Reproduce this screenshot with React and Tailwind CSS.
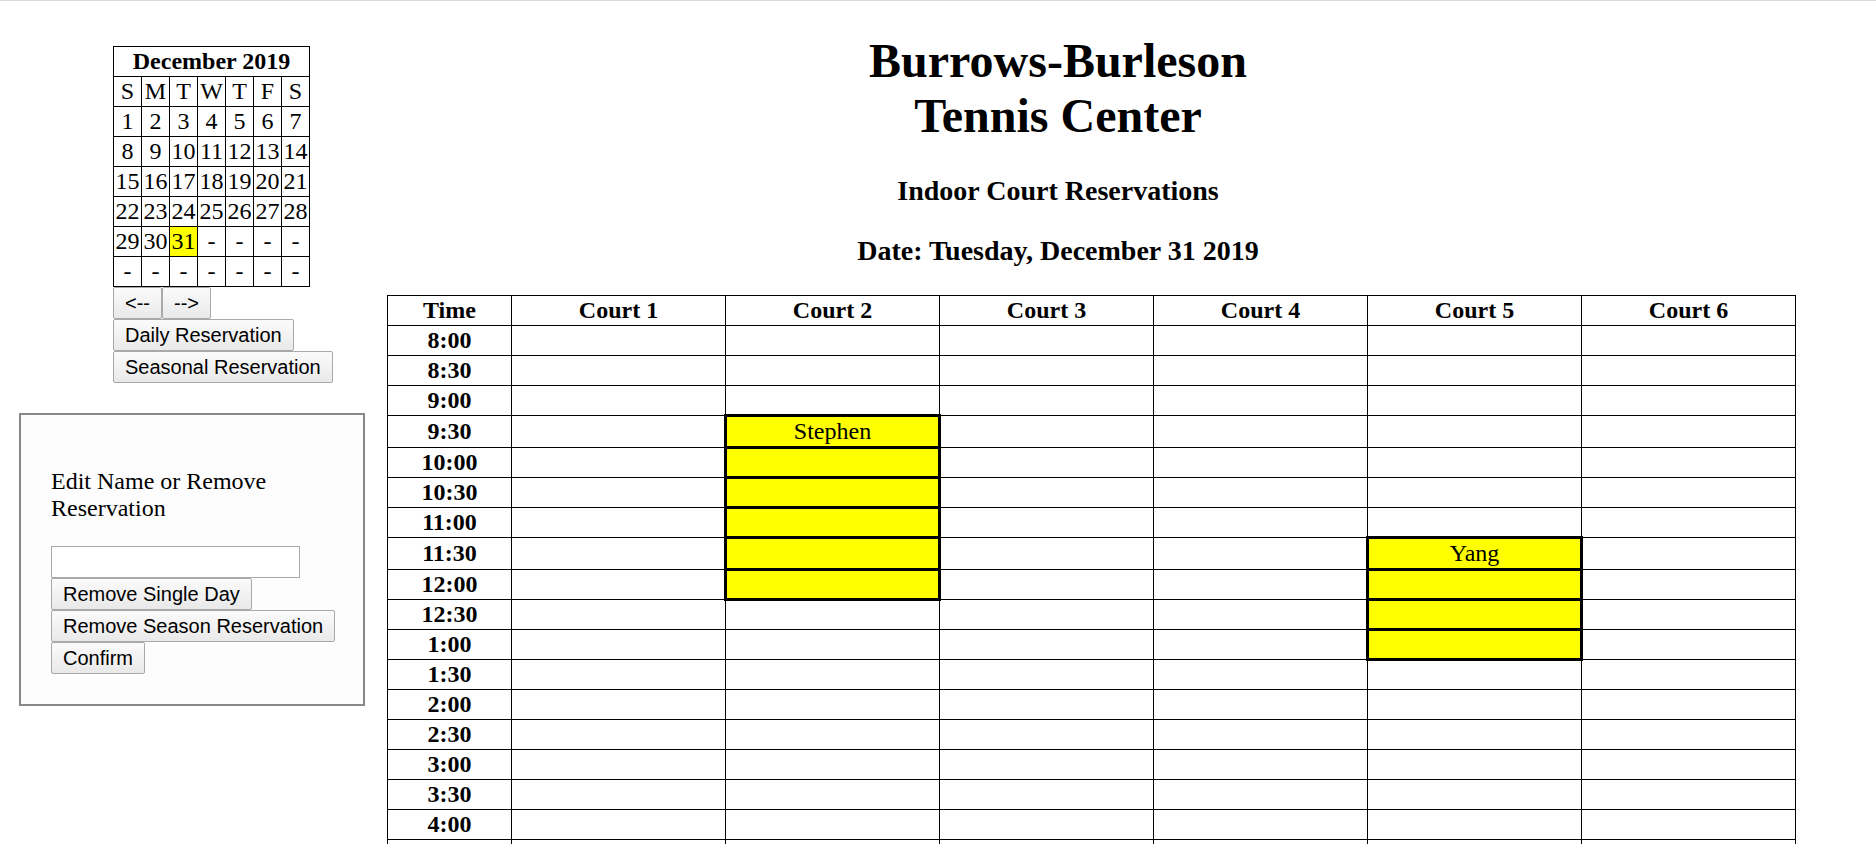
import React from "react";

const times = [
  "8:00", "8:30", "9:00", "9:30", "10:00", "10:30", "11:00", "11:30", "12:00",
  "12:30", "1:00", "1:30", "2:00", "2:30", "3:00", "3:30", "4:00", "4:30",
  "5:00", "5:30", "6:00", "6:30", "7:00", "7:30", "8:00", "8:30", "9:00",
];

const courts = [1, 2, 3, 4, 5, 6];

// court number -> first row index, number of slots, name
const reservations = {
  2: { start: 3, len: 6, name: "Stephen" },
  5: { start: 7, len: 4, name: "Yang" },
};

const weeks = [
  ["1", "2", "3", "4", "5", "6", "7"],
  ["8", "9", "10", "11", "12", "13", "14"],
  ["15", "16", "17", "18", "19", "20", "21"],
  ["22", "23", "24", "25", "26", "27", "28"],
  ["29", "30", "31", "-", "-", "-", "-"],
  ["-", "-", "-", "-", "-", "-", "-"],
];

const btn =
  "h-[32px] px-[11px] leading-none text-[20px] text-black font-['Liberation_Sans',Arial,sans-serif] border border-[#a9a9a9] rounded-[2px] bg-linear-to-b from-[#fbfbfb] to-[#e9e9e9] whitespace-nowrap";

const calCell = "border border-black p-0 leading-[29px] text-center";
const cell = "border border-black p-0 leading-[29px] text-center";

const Calendar = () => {
  return (
    <table className="w-[197px] table-fixed border-collapse text-[24px]">
      <thead>
        <tr>
          <th colSpan={7} className={`${calCell} font-bold`}>December 2019</th>
        </tr>
        <tr>
          {["S", "M", "T", "W", "T", "F", "S"].map((d, i) => (
            <td key={i} className={calCell}>{d}</td>
          ))}
        </tr>
      </thead>
      <tbody>
        {weeks.map((w, wi) => (
          <tr key={wi}>
            {w.map((d, di) => (
              <td key={di} className={`${calCell} ${d === "31" ? "bg-[#ffff00]" : ""}`}>
                {d}
              </td>
            ))}
          </tr>
        ))}
      </tbody>
    </table>
  );
};

const Sidebar = () => {
  return (
    <div className="w-[240px] shrink-0 pt-[45px]">
      <div className="ml-[113px] flex flex-col items-start">
        <Calendar />
        <div className="flex">
          <button className={btn}>{"<--"}</button>
          <button className={btn}>{"-->"}</button>
        </div>
        <button className={btn}>Daily Reservation</button>
        <button className={btn}>Seasonal Reservation</button>
      </div>

      <div className="ml-[19px] mt-[30px] w-[346px] border-2 border-[#888888] bg-[#fdfdfd] px-[30px] pt-[30px] pb-[30px]">
        <p className="mt-[23px] text-[24px] leading-[27px]">Edit Name or Remove Reservation</p>
        <div className="mt-[24px] flex flex-col items-start">
          <input type="text" className="w-[249px] h-[32px] border border-[#a9a9a9] bg-white outline-none" />
          <button className={btn}>Remove Single Day</button>
          <button className={btn}>Remove Season Reservation</button>
          <button className={btn}>Confirm</button>
        </div>
      </div>
    </div>
  );
};

const Schedule = () => {
  return (
    <table className="ml-[147px] mt-[28px] w-[1409px] table-fixed border-collapse text-[24px]">
      <colgroup>
        <col className="w-[124px]" />
        {courts.map((c) => (
          <col key={c} />
        ))}
      </colgroup>
      <thead>
        <tr>
          <th className={`${cell} font-bold`}>Time</th>
          {courts.map((c) => (
            <th key={c} className={`${cell} font-bold`}>Court {c}</th>
          ))}
        </tr>
      </thead>
      <tbody>
        {times.map((t, ri) => (
          <tr key={ri}>
            <td className={`${cell} font-bold`}>{t}</td>
            {courts.map((c) => {
              const r = reservations[c];
              const booked = r && ri >= r.start && ri < r.start + r.len;
              return (
                <td
                  key={c}
                  className={booked ? "border-[3px] border-black bg-[#ffff00] p-0 leading-[29px] text-center" : cell}
                >
                  {booked && ri === r.start ? r.name : ""}
                </td>
              );
            })}
          </tr>
        ))}
      </tbody>
    </table>
  );
};

export default function App() {
  return (
    <div className="min-h-screen bg-white text-black font-['Liberation_Serif','Times_New_Roman',serif]">
      <div className="h-px bg-[#dadada]" />
      <div className="flex">
        <Sidebar />
        <div className="flex-1 pt-[32px]">
          <h1 className="text-center text-[48px] leading-[55px] font-bold">
            Burrows-Burleson
            <br />
            Tennis Center
          </h1>
          <h3 className="mt-[32px] text-center text-[28px] leading-[32px] font-bold">
            Indoor Court Reservations
          </h3>
          <h3 className="mt-[28px] text-center text-[28px] leading-[32px] font-bold">
            Date: Tuesday, December 31 2019
          </h3>
          <Schedule />
        </div>
      </div>
    </div>
  );
}
